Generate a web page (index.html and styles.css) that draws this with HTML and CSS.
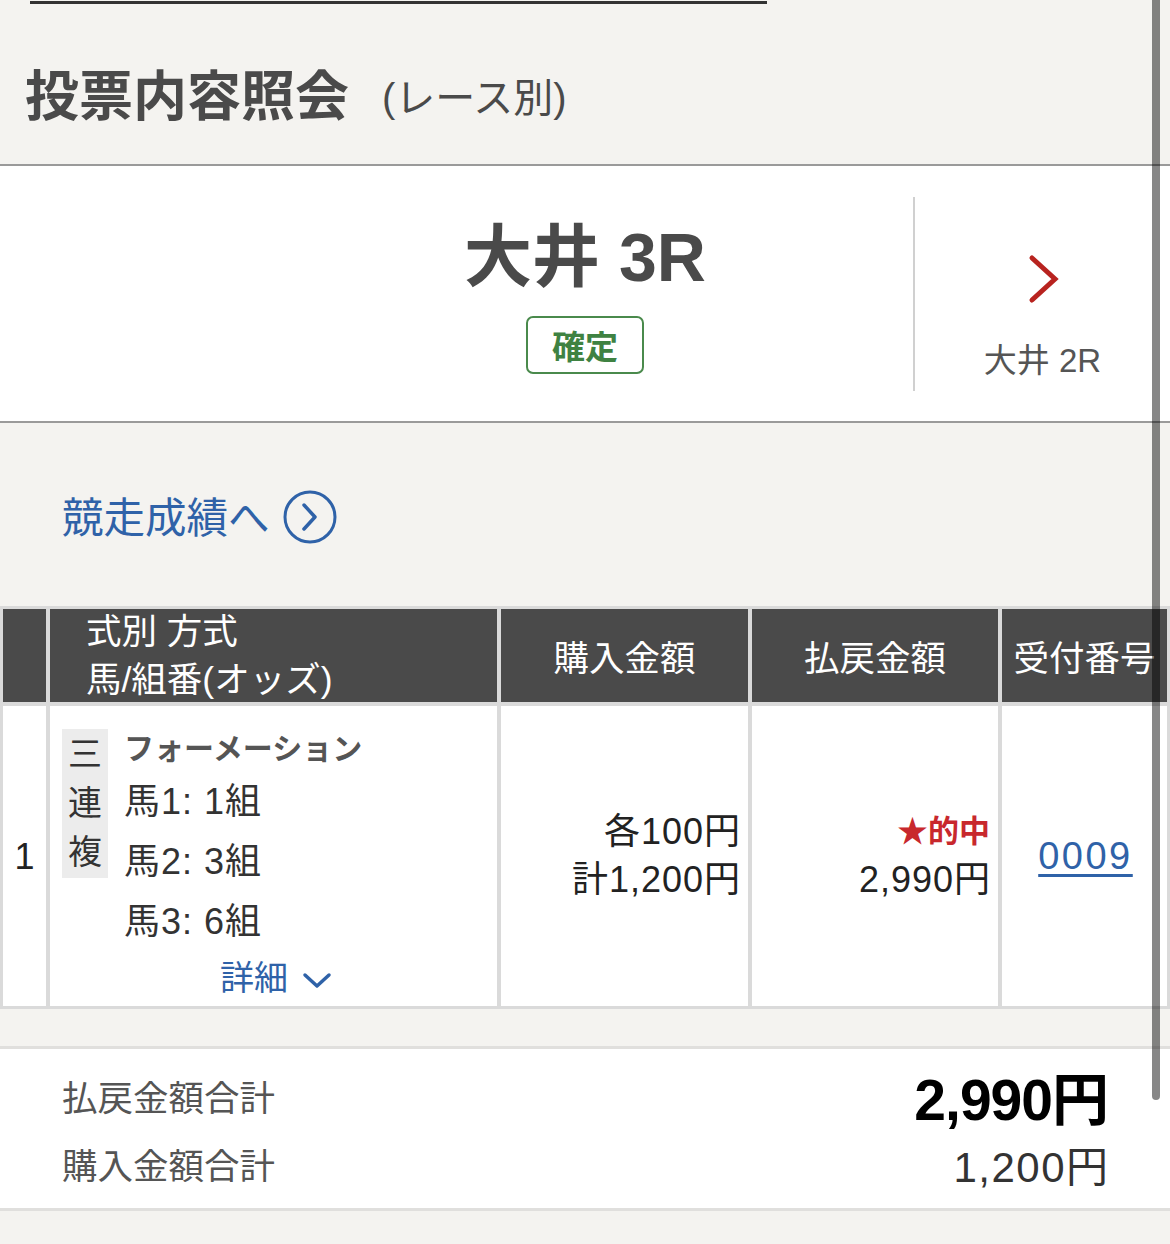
FILE: index.html
```html
<!DOCTYPE html>
<html lang="ja">
<head>
<meta charset="utf-8">
<title>投票内容照会</title>
<link rel="stylesheet" href="styles.css">
</head>
<body>
<div class="page">
  <div class="crumb"><span class="crumb-line"></span></div>

  <header class="page-head">
    <h1 class="page-title">投票内容照会</h1>
    <span class="page-sub">(レース別)</span>
  </header>

  <section class="race-nav">
    <div class="nav-side"></div>
    <div class="race-main">
      <div class="race-name">大井 3R</div>
      <span class="badge">確定</span>
    </div>
    <a class="nav-side nav-next">
      <svg class="chev-red" width="32" height="50" viewBox="0 0 32 50"><path d="M4 4 L27 25 L4 46" fill="none" stroke="#b8231f" stroke-width="5" stroke-linecap="round" stroke-linejoin="miter"/></svg>
      <span class="nav-label">大井 2R</span>
    </a>
  </section>

  <div class="result-link">
    <a class="result-text">競走成績へ</a>
    <svg class="circle-icon" width="56" height="56" viewBox="0 0 56 56"><circle cx="28" cy="28" r="25" fill="none" stroke="#2f62a8" stroke-width="3"/><path d="M22 16 L33 28 L22 40" fill="none" stroke="#2f62a8" stroke-width="3.5" stroke-linecap="round" stroke-linejoin="round"/></svg>
  </div>

  <div class="bet-table">
    <div class="th th-no"></div>
    <div class="th th-type"><span>式別 方式</span><span>馬/組番(オッズ)</span></div>
    <div class="th th-c">購入金額</div>
    <div class="th th-c">払戻金額</div>
    <div class="th th-c">受付番号</div>

    <div class="td td-no">1</div>
    <div class="td td-type">
      <div class="kind"><span>三</span><span>連</span><span>複</span></div>
      <div class="detail">
        <div class="method">フォーメーション</div>
        <div class="horse">馬1: 1組</div>
        <div class="horse">馬2: 3組</div>
        <div class="horse">馬3: 6組</div>
        <div class="more">詳細<svg class="chev-down" width="30" height="20" viewBox="0 0 30 20"><path d="M3 5 L15 16 L27 5" fill="none" stroke="#2f62a8" stroke-width="3.5" stroke-linecap="round" stroke-linejoin="round"/></svg></div>
      </div>
    </div>
    <div class="td td-amt"><span>各100円</span><span>計1,200円</span></div>
    <div class="td td-amt"><span class="hit">★的中</span><span>2,990円</span></div>
    <div class="td td-num"><a class="rcpt">0009</a></div>
  </div>

  <div class="summary">
    <div class="sum-row"><span class="sum-label">払戻金額合計</span><span class="sum-big">2,990円</span></div>
    <div class="sum-row"><span class="sum-label">購入金額合計</span><span class="sum-val">1,200円</span></div>
  </div>

  <div class="scrollbar"></div>
</div>
</body>
</html>
```

FILE: styles.css
```css
* { box-sizing: border-box; }
html, body { margin: 0; padding: 0; }
body {
  background: #f4f3f0;
  font-family: "Liberation Sans", "Noto Sans CJK JP", sans-serif;
  color: #333;
}
.page {
  position: relative;
  width: 1170px;
  height: 1244px;
  overflow: hidden;
}

.crumb { height: 5px; padding-top: 1px; padding-left: 30px; }
.crumb-line { display: block; width: 737px; height: 3px; background: #333; }

.page-head {
  height: 161px;
  display: flex;
  align-items: center;
  padding-left: 25px;
  padding-top: 15px;
  border-bottom: 2px solid #9a9a9a;
  gap: 33px;
}
.page-title {
  margin: 0;
  font-size: 54px;
  font-weight: 700;
  color: #4a4a4a;
}
.page-sub {
  font-size: 40px;
  color: #4a4a4a;
  padding-top: 6px;
}

.race-nav {
  background: #fff;
  display: flex;
  align-items: center;
  height: 257px;
  border-bottom: 2px solid #9a9a9a;
}
.nav-side { width: 257px; flex: none; }
.race-main {
  flex: 1;
  display: flex;
  flex-direction: column;
  align-items: center;
  padding-top: 12px;
}
.race-name {
  font-size: 68px;
  font-weight: 700;
  color: #4a4a4a;
  line-height: 64px;
  margin-bottom: 27px;
}
.badge {
  width: 118px;
  height: 58px;
  border: 2.5px solid #4a8a4c;
  border-radius: 7px;
  color: #3f8242;
  font-size: 33px;
  font-weight: 700;
  display: flex;
  align-items: center;
  justify-content: center;
}
.nav-next {
  height: 194px;
  border-left: 2px solid #d0d0d0;
  display: flex;
  flex-direction: column;
  align-items: center;
  padding-top: 57px;
}
.chev-red { display: block; margin-left: 2px; margin-bottom: 37px; }
.nav-label { font-size: 33px; line-height: 40px; color: #555; }

.result-link {
  height: 183px;
  display: flex;
  align-items: center;
  padding-left: 62px;
  gap: 12px;
}
.result-text { font-size: 41.5px; color: #2f62a8; }
.circle-icon { display: block; margin-top: 4px; }

.bet-table {
  display: grid;
  grid-template-columns: 43px 447px 247px 246px 1fr;
  grid-template-rows: 93px 300px;
  gap: 4px;
  padding: 3px;
  background: #dadada;
  width: 1170px;
}
.th {
  background: #4a4a4a;
  color: #fff;
  font-size: 35.5px;
}
.th-type {
  display: flex;
  flex-direction: column;
  justify-content: center;
  padding-left: 36px;
  line-height: 48px;
}
.th-c { display: flex; align-items: center; justify-content: center; }
.td { background: #fff; font-size: 36px; color: #222; letter-spacing: 1px; }
.td-no { display: flex; align-items: center; justify-content: center; padding-top: 2px; letter-spacing: 0; }
.td-type { display: flex; padding: 20px 0 0 12px; }
.kind {
  flex: none;
  width: 46px;
  height: 149px;
  margin-top: 3px;
  background: #ececec;
  display: flex;
  flex-direction: column;
  align-items: center;
  justify-content: center;
  line-height: 49px;
  font-size: 34px;
  letter-spacing: 0;
  color: #333;
}
.detail { flex: 1; padding-left: 16px; }
.method { font-size: 30px; font-weight: 700; color: #555; line-height: 46px; letter-spacing: 0; }
.horse { line-height: 60px; color: #333; }
.more {
  line-height: 52px;
  color: #2f62a8;
  display: flex;
  align-items: center;
  gap: 14px;
  margin-left: 96px;
  font-size: 34px;
  letter-spacing: 0;
}
.chev-down { display: block; margin-top: 4px; }
.td-amt {
  display: flex;
  flex-direction: column;
  justify-content: center;
  align-items: flex-end;
  padding-right: 7px;
  line-height: 48px;
}
.hit { color: #c8282d; font-weight: 700; font-size: 31px; letter-spacing: 0; margin-right: 1px; }
.td-num { display: flex; align-items: center; justify-content: center; padding-right: 0; }
.rcpt { color: #2f62a8; text-decoration: underline; text-underline-offset: 5px; font-size: 38px; letter-spacing: 2.5px; margin-right: -2px; }

.summary {
  margin-top: 37px;
  background: #fff;
  border-top: 3px solid #e0dfdd;
  border-bottom: 3px solid #e0dfdd;
  padding: 14px 62px 13px 62px;
  display: flex;
  flex-direction: column;
  gap: 4px;
}
.sum-row {
  height: 64px;
  display: flex;
  align-items: center;
  justify-content: space-between;
}
.sum-label { font-size: 35.5px; color: #555; }
.sum-big { font-size: 57px; font-weight: 700; color: #000; letter-spacing: -1px; }
.sum-val { font-size: 42px; color: #333; letter-spacing: 1.5px; margin-right: -1.5px; }

.scrollbar {
  position: absolute;
  top: 0;
  left: 1152px;
  width: 8px;
  height: 1100px;
  border-radius: 0 0 4px 4px;
  background: rgba(0, 0, 0, 0.47);
}
```
